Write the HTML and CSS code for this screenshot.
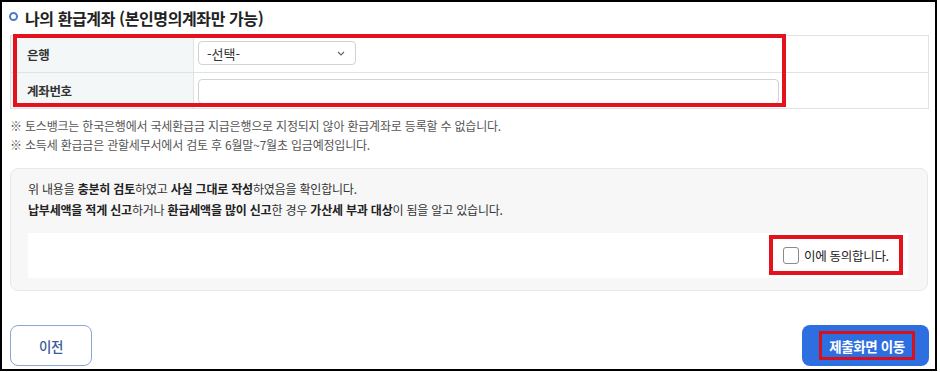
FILE: index.html
```html
<!DOCTYPE html>
<html lang="ko">
<head>
<meta charset="utf-8">
<link rel="stylesheet" href="styles.css">
</head>
<body>
<div class="frame">
  <h2 class="title"><span class="ring"></span>나의 환급계좌 (본인명의계좌만 가능)</h2>
  <div class="table-wrap">
    <div class="table">
      <div class="th">은행</div>
      <div class="td">
        <div class="select"><span>-선택-</span>
          <svg class="chev" width="8" height="5" viewBox="0 0 8 5"><path d="M1 1 L4 4 L7 1" fill="none" stroke="#666" stroke-width="1.2"/></svg>
        </div>
      </div>
      <div class="th last">계좌번호</div>
      <div class="td last"><div class="input"></div></div>
    </div>
    <div class="mark-table"></div>
  </div>
  <div class="notes">
    <p>※ 토스뱅크는 한국은행에서 국세환급금 지급은행으로 지정되지 않아 환급계좌로 등록할 수 없습니다.</p>
    <p>※ 소득세 환급금은 관할세무서에서 검토 후 6월말~7월초 입금예정입니다.</p>
  </div>
  <div class="agree-box">
    <p>위 내용을 <b>충분히 검토</b>하였고 <b>사실 그대로 작성</b>하였음을 확인합니다.</p>
    <p><b>납부세액을 적게 신고</b>하거나 <b>환급세액을 많이 신고</b>한 경우 <b>가산세 부과 대상</b>이 됨을 알고 있습니다.</p>
    <div class="agree-bar">
      <label class="agree"><span class="check"></span><span>이에 동의합니다.</span></label>
    </div>
  </div>
  <div class="buttons">
    <button class="btn prev">이전</button>
    <button class="btn submit"><span class="mark-text">제출화면 이동</span></button>
  </div>
</div>
</body>
</html>
```
FILE: styles.css
```css
* { box-sizing: border-box; }
html, body { margin: 0; padding: 0; background: #fff; }
body {
  font-family: "Noto Sans CJK KR", "Noto Sans", sans-serif;
  color: #333;
}
.frame {
  width: 937px;
  height: 371px;
  border: 2px solid #000;
  padding: 0 6px 0 8px;
  display: flex;
  flex-direction: column;
}
.title {
  margin: 0;
  padding-top: 4px;
  margin-bottom: 5px;
  height: 28px;
  line-height: 22px;
  font-size: 16px;
  font-weight: 700;
  letter-spacing: -0.4px;
  color: #222;
  display: flex;
  align-items: center;
  gap: 7px;
}
.ring {
  width: 9px;
  height: 9px;
  border: 2px solid #4a7bd0;
  border-radius: 50%;
  margin-left: -1px;
  margin-top: -4px;
}
.table-wrap { position: relative; }
.table {
  display: grid;
  grid-template-columns: 183px 1fr;
  border: 1px solid #e0e3e3;
  width: 919px;
}
.th, .td {
  height: 37px;
  border-bottom: 1px solid #e0e3e3;
  display: flex;
  align-items: center;
}
.th.last, .td.last { height: 35px; border-bottom: none; }
.th {
  background: #f3f7f7;
  border-right: 1px solid #e0e3e3;
  padding-left: 16px;
  font-size: 12.5px;
  font-weight: 700;
  color: #333;
  letter-spacing: -0.3px;
}
.td { padding-left: 4px; }
.select {
  width: 158px;
  height: 24px;
  border: 1px solid #cfd3d6;
  border-radius: 4px;
  display: flex;
  align-items: center;
  justify-content: space-between;
  padding: 0 10px 0 8px;
  font-size: 13px;
  color: #333;
  margin-top: -2px;
}
.chev { display: block; }
.input {
  width: 581px;
  height: 25px;
  border: 1px solid #cfd3d6;
  border-radius: 4px;
  margin-top: 1px;
}
.mark-table {
  position: absolute;
  left: 3px;
  top: -1px;
  width: 773px;
  height: 73px;
  border: 4px solid #e3121c;
}
.notes {
  margin-top: 7px;
  font-size: 12px;
  letter-spacing: -0.2px;
  color: #555;
}
.notes p { margin: 0; line-height: 19px; }
.agree-box {
  margin-top: 14px;
  width: 918px;
  height: 123px;
  border: 1px solid #e8e8e8;
  border-radius: 8px;
  background: #f7f7f7;
  padding: 9px 19px 0 17px;
  font-size: 12px;
  letter-spacing: -0.2px;
  color: #333;
}
.agree-box p { margin: 0; line-height: 21px; }
.agree-box b { font-weight: 700; color: #222; }
.agree-bar {
  margin-top: 13px;
  height: 45px;
  background: #fff;
  display: flex;
  justify-content: flex-end;
  align-items: center;
  padding-right: 5px;
}
.agree {
  height: 40px;
  width: 134px;
  border: 4px solid #e3121c;
  display: flex;
  align-items: center;
  gap: 5px;
  padding-left: 10px;
  font-size: 12.5px;
  color: #222;
  letter-spacing: -0.3px;
  margin-top: -1px;
}
.check {
  width: 16px;
  height: 17px;
  border: 1px solid #8a8a8a;
  border-radius: 3px;
  background: #fff;
}
.buttons {
  margin-top: 34px;
  display: flex;
  justify-content: space-between;
  align-items: center;
}
.btn {
  height: 41px;
  border-radius: 8px;
  font-family: "Noto Sans CJK KR", "Noto Sans", sans-serif;
  font-size: 13.5px;
  letter-spacing: -0.4px;
  padding: 0;
  display: flex;
  align-items: center;
  justify-content: center;
}
.prev {
  width: 82px;
  background: #fff;
  border: 1px solid #8ba6d6;
  color: #3b5b9b;
  font-weight: 500;
}
.submit {
  width: 127px;
  background: #2d6ee1;
  border: none;
  color: #fff;
  font-weight: 700;
}
.mark-text {
  width: 96px;
  height: 29px;
  border: 3px solid #d8101c;
  display: flex;
  align-items: center;
  justify-content: center;
  margin-left: 3px;
}
```
